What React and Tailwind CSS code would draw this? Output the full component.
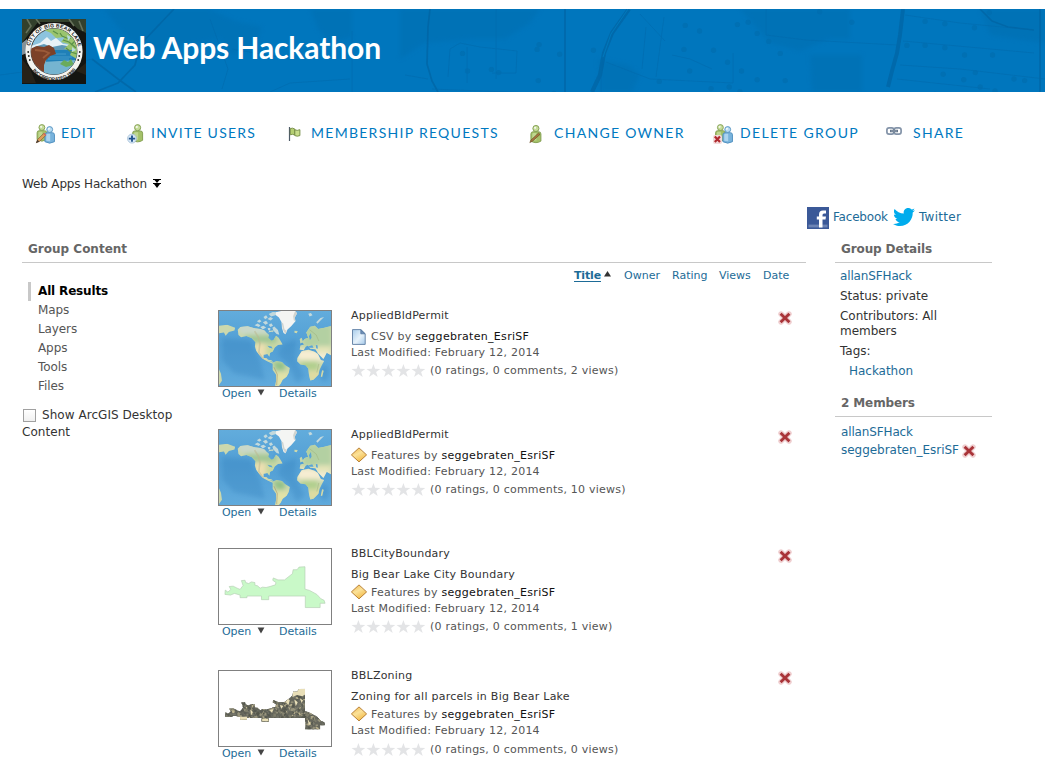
import React from "react";

const CITY_SHAPE =
  "M43 163 L44 150 L52 156 L61 148 L56 139 L68 138 L80 144 L89 148 L98 136 L93 121 L104 120 L106 127 L115 130 L123 125 L134 127 L134 135 L142 137 L150 144 L157 141 L168 142 L180 139 L196 134 L198 127 L188 120 L190 113 L204 119 L224 119 L248 100 L250 88 L262 88 L268 80 L286 79 V147 L300 151 L322 163 L334 176 L344 181 L347 190 L332 190 V203 H287 V168 H176 V179 H154 V168 H110 V173 H89 V165 L72 160 L60 165 Z";

function Person({ x = 0, y = 0, s = 1, tone }) {
  const light = tone === "green" ? "#c6dc9a" : "#b9dcf2";
  const dark = tone === "green" ? "#7f9c4d" : "#4c8dbd";
  return (
    <g transform={`translate(${x} ${y}) scale(${s})`} stroke={dark} strokeWidth="0.9">
      <path d="M0.6 9 Q0.6 6.8 2.8 6.8 H8.2 Q10.4 6.8 10.4 9 V16 Q5.5 19 0.6 16 Z" fill={tone === "green" ? "#a4c169" : "#78b3dc"} />
      <path d="M2 9 Q2 8 3.5 8 H6 V15.5 Q3 15.5 2 15 Z" fill={light} stroke="none" opacity="0.8" />
      <circle cx="5.5" cy="3.6" r="3" fill={light} />
      <circle cx="4.7" cy="2.9" r="1.1" fill="#fff" stroke="none" opacity="0.8" />
    </g>
  );
}

function Pencil() {
  return (
    <g>
      <path d="M1.5 18.6 L2.6 15.4 L8.6 9.6 L10.6 11.6 L4.6 17.4 Z" fill="#dca05a" stroke="#875a33" strokeWidth="0.7" />
      <path d="M8.2 10 L9.4 8.8 L11.5 10.9 L10.2 12 Z" fill="#d26a5e" />
      <path d="M0.8 19.2 L2.4 15.8 L4.3 17.6 Z" fill="#453a30" />
    </g>
  );
}

function EditIcon() {
  return (
    <svg width="20" height="20" viewBox="0 0 20 20">
      <Person x={1.5} y={0} s={0.98} tone="green" />
      <Person x={9.3} y={2} s={0.98} tone="blue" />
      <Pencil />
    </svg>
  );
}

function InviteIcon() {
  return (
    <svg width="17" height="20" viewBox="0 0 17 20">
      <Person x={5} y={0} s={1.02} tone="green" />
      <circle cx="5" cy="14.6" r="4.5" fill="#d8e8f5" stroke="#9cb8d4" strokeWidth="0.7" />
      <path d="M5 11.4 V17.8 M1.8 14.6 H8.2" stroke="#23548f" strokeWidth="1.9" />
    </svg>
  );
}

function FlagIcon() {
  return (
    <svg width="13" height="14" viewBox="0 0 13 14">
      <path d="M1.5 0 V14" stroke="#4d5a68" strokeWidth="1.2" />
      <path d="M2.3 1.6 Q4.5 0.5 6.8 2 V8 Q4.5 6.8 2.3 7.8 Z" fill="#b5cf72" stroke="#71893f" strokeWidth="0.9" />
      <path d="M6.8 2.8 Q9.3 4 11.9 2.7 V8.6 Q9.3 9.8 6.8 8.6 Z" fill="#c8dd8b" stroke="#71893f" strokeWidth="0.9" />
    </svg>
  );
}

function OwnerIcon() {
  return (
    <svg width="13" height="20" viewBox="0 0 13 20">
      <Person x={1.3} y={0.8} s={1.02} tone="green" />
      <path d="M0.8 18.6 L2 16 L9.6 9 L11 10.4 L3.4 17.3 Z" fill="#a8763f" stroke="#634522" strokeWidth="0.6" />
    </svg>
  );
}

function DeleteGroupIcon() {
  return (
    <svg width="20" height="20" viewBox="0 0 20 20">
      <Person x={2} y={0} s={0.98} tone="green" />
      <Person x={9.3} y={2} s={0.98} tone="blue" />
      <rect x="0" y="11" width="9" height="9" rx="2" fill="#f3dada" />
      <path d="M1.8 12.6 L7 18 M7 12.6 L1.8 18" stroke="#b02a2f" strokeWidth="2.2" />
    </svg>
  );
}

function LinkIcon() {
  return (
    <svg width="16" height="8" viewBox="0 0 16 8" fill="none">
      <rect x="0.9" y="0.9" width="7" height="6.2" rx="2.2" stroke="#8393a8" strokeWidth="1.7" />
      <rect x="8.1" y="0.9" width="7" height="6.2" rx="2.2" stroke="#8393a8" strokeWidth="1.7" />
      <path d="M4 4 H12" stroke="#44566e" strokeWidth="2.4" />
      <path d="M4.4 4 H11.6" stroke="#d5dee8" strokeWidth="0.8" />
    </svg>
  );
}

function RemoveIcon() {
  return (
    <svg width="14" height="14" viewBox="0 0 14 14" className="block shrink-0">
      <path d="M3 3 L11 11 M11 3 L3 11" stroke="#efcfd0" strokeWidth="5.4" strokeLinecap="round" />
      <path d="M2.6 2.8 L11.4 11.2 M11.4 2.8 L2.6 11.2" stroke="#a93439" strokeWidth="2.9" />
    </svg>
  );
}

function CsvIcon() {
  return (
    <svg width="16" height="16" viewBox="0 0 16 16" className="block">
      <defs>
        <linearGradient id="sheet" x1="0" y1="0" x2="1" y2="1">
          <stop offset="0" stopColor="#a9cdeb" />
          <stop offset="0.55" stopColor="#e6f2fb" />
          <stop offset="1" stopColor="#a5c9ea" />
        </linearGradient>
      </defs>
      <path d="M1.5 0.6 H9.8 L14.2 4.8 V15.4 H1.5 Z" fill="url(#sheet)" stroke="#6b88aa" strokeWidth="1" />
      <path d="M9.8 0.6 V4.8 H14 Z" fill="#6e8fb6" stroke="#54779f" strokeWidth="0.8" />
    </svg>
  );
}

function FeatureIcon() {
  return (
    <svg width="16" height="16" viewBox="0 0 16 16" className="-mt-0.5 block">
      <defs>
        <linearGradient id="diamond" x1="0" y1="0" x2="0.6" y2="1">
          <stop offset="0" stopColor="#f0b13c" />
          <stop offset="0.5" stopColor="#fbe29a" />
          <stop offset="1" stopColor="#f3bb48" />
        </linearGradient>
      </defs>
      <path d="M8 0.9 L15.6 7.9 L8 14.9 L0.4 7.9 Z" fill="url(#diamond)" stroke="#b98238" strokeWidth="1" strokeLinejoin="round" />
    </svg>
  );
}

function Stars() {
  return (
    <svg width="75" height="15" viewBox="0 0 75 15" className="block" fill="#e3e4e6">
      {[0, 15, 30, 45, 60].map((x) => (
        <path key={x} transform={`translate(${x} 0)`} d="M7.4 0.9 L9.1 5.8 L14.3 5.9 L10.1 9 L11.7 14 L7.4 11 L3.1 14 L4.7 9 L0.5 5.9 L5.7 5.8 Z" />
      ))}
    </svg>
  );
}

function WorldMap() {
  return (
    <svg width="112" height="75" viewBox="25 31 340 228" preserveAspectRatio="none" className="block">
      <defs>
        <linearGradient id="sea" x1="0" y1="0" x2="0" y2="1">
          <stop offset="0" stopColor="#62acdc" />
          <stop offset="0.45" stopColor="#529fd5" />
          <stop offset="1" stopColor="#60aadc" />
        </linearGradient>
        <filter id="soft" x="-10%" y="-10%" width="120%" height="120%">
          <feGaussianBlur stdDeviation="7" />
        </filter>
        <clipPath id="lands">
          <path d="M82 88 L90 80 L112 77 L130 83 L150 86 L163 90 L172 100 L178 92 L190 90 L188 102 L180 112 L190 120 L198 106 L206 112 L214 125 L218 133 L204 134 L194 142 L188 154 L180 158 L178 170 L172 162 L160 164 L160 174 L170 175 L178 184 L190 188 L189 192 L174 185 L158 176 L147 164 L138 152 L134 138 L136 126 L124 113 L108 107 L92 111 L84 104 Z" />
          <path d="M188 188 L200 183 L216 186 L225 195 L240 204 L237 219 L230 231 L218 240 L212 252 L206 260 H195 L199 240 L198 224 L188 210 Z" />
          <path d="M263 174 L276 153 L296 149 L315 155 L325 162 L334 180 L344 183 L336 198 L330 210 L327 224 L312 240 L302 242 L298 224 L296 206 L288 196 L272 194 L262 184 Z" />
          <path d="M270 148 L272 136 L284 133 L277 126 L285 116 L296 112 L290 96 L302 79 L316 76 L326 86 L345 82 L366 76 V166 L352 158 L342 177 L326 160 L318 147 L302 146 L294 136 L288 140 L282 150 Z" />
          <path d="M25 76 L50 73 L74 82 L72 90 L55 95 L45 106 L40 96 L25 99 Z" />
          <path d="M25 208 L31 222 L34 243 L25 256 Z M254 91 L264 92 L261 99 L254 97 Z M270 116 L276 112 L280 126 L272 130 Z M165 178 L184 181 L190 185 L178 184 Z M338 211 L343 213 L338 232 L334 230 Z" />
        </clipPath>
      </defs>
      <rect x="25" y="31" width="340" height="228" fill="url(#sea)" />
      <g fill="#327fbb" opacity="0.3" filter="url(#soft)">
        <path d="M35 112 L120 120 L150 185 L165 240 L70 220 L35 180 Z" />
        <path d="M215 135 L258 115 L256 175 L285 230 L260 250 L236 195 L205 165 Z" />
        <ellipse cx="345" cy="220" rx="14" ry="25" />
      </g>
      <g clipPath="url(#lands)">
        <rect x="25" y="31" width="340" height="228" fill="#cbd8ad" />
        <g filter="url(#soft)">
          <path d="M80 70 H215 V100 H90 Z" fill="#c9d8cb" />
          <path d="M100 105 H200 V128 H120 Z" fill="#a3c795" />
          <path d="M135 130 H166 V185 H135 Z" fill="#ecdfb0" />
          <path d="M168 132 H200 V165 H168 Z" fill="#c8d89f" />
          <path d="M188 185 H225 V212 H200 Z" fill="#93c189" />
          <path d="M198 218 H240 V260 H198 Z" fill="#e2e2a6" />
          <path d="M262 148 H345 V180 H262 Z" fill="#f6edd2" />
          <path d="M275 186 H325 V210 H275 Z" fill="#b1cf8d" />
          <path d="M295 214 H335 V240 H295 Z" fill="#dfdca0" />
          <path d="M280 75 H365 V140 H280 Z" fill="#b3d0a2" />
          <path d="M320 138 H365 V160 H320 Z" fill="#e4e4b8" />
          <path d="M325 160 H365 V182 H325 Z" fill="#f4ecd4" />
        </g>
        <path d="M133 92 L145 112 L149 130 L146 158 L160 178" stroke="#bcb68e" strokeWidth="5" fill="none" opacity="0.5" />
        <path d="M192 202 L202 224 L200 256" stroke="#a78c65" strokeWidth="3" fill="none" opacity="0.5" />
        <path d="M328 192 L322 218 M300 88 L320 104 L328 122" stroke="#9aab6f" strokeWidth="3" fill="none" opacity="0.4" />
      </g>
      <path d="M170 96 L177 104 L175 112 L184 121 L189 119 L187 108 L194 101 L187 94 Z" fill="#5aa5d8" />
      <path d="M172 137 L184 139 L188 145 L178 143 Z M295 139 L308 135 L312 143 L300 143 Z M319 134 L324 135 L325 146 L320 144 Z M298 108 L304 98 L306 112 L301 119 Z" fill="#5aa5d8" />
      <g fill="#c3d9dc">
        <path d="M133 74 L142 69 L151 74 L146 80 Z M150 80 L160 76 L168 81 L158 87 Z M140 62 L148 57 L154 62 L147 67 Z M158 65 L168 61 L174 68 L166 73 Z M160 49 L168 44 L173 51 L165 56 Z M172 55 L181 49 L189 54 L182 60 Z M176 40 L188 34 L204 35 L196 44 L183 48 Z M176 73 L184 68 L189 76 L181 80 Z M187 82 L193 78 L204 89 L208 103 L200 101 L190 90 Z M173 83 L181 83 L180 91 L174 89 Z M296 39 L304 37 L309 44 L300 48 Z M320 65 L333 52 L344 49 L331 62 L324 70 Z" />
      </g>
      <path d="M198 35 L214 31 H256 L262 38 L255 51 L257 62 L244 77 L233 87 L227 102 L221 98 L216 82 L215 65 L207 51 L197 43 Z" fill="#f4f5f3" />
      <path d="M215 65 L219 88 L227 102 L231 91 L224 87 L220 69 Z M256 31 L262 38 L255 51 L257 62 L252 59 L250 47 Z" fill="#d0d4d0" />
    </svg>
  );
}

function BoundaryMap() {
  return (
    <svg width="112" height="75" viewBox="25 25 340 228" preserveAspectRatio="none" className="block">
      <path d={CITY_SHAPE} fill="#c9f9c8" stroke="#b4ceb3" strokeWidth="2" strokeLinejoin="round" />
    </svg>
  );
}

const PARCEL_COLORS = ["#54564b", "#6f7065", "#7e7d6b", "#55584f", "#98947c", "#65675c", "#5b5d54", "#bdb48f", "#5a5c54", "#76766a"];
let seed = 11;
const random = () => {
  seed = (seed * 48271) % 2147483647;
  return seed / 2147483647;
};
const PARCELS = Array.from({ length: 1500 }, () => ({
  x: 38 + random() * 310,
  y: 76 + random() * 130,
  w: 3 + random() * 7,
  h: 3 + random() * 6,
  r: random() * 90,
  fill: PARCEL_COLORS[Math.floor(random() * PARCEL_COLORS.length)],
}));

function ZoningMap() {
  return (
    <svg width="112" height="75" viewBox="25 25 340 228" preserveAspectRatio="none" className="block">
      <defs>
        <clipPath id="city">
          <path d={CITY_SHAPE} />
        </clipPath>
      </defs>
      <g clipPath="url(#city)">
        <rect x="30" y="70" width="330" height="140" fill="#66675c" />
        {PARCELS.map((p, i) => (
          <rect key={i} x={p.x} y={p.y} width={p.w} height={p.h} fill={p.fill} transform={`rotate(${p.r} ${p.x} ${p.y})`} />
        ))}
        <g fill="#e9dfb8">
          <path d="M248 78 H288 V96 L278 102 L262 98 L248 104 Z" />
          <path d="M88 164 H110 V175 H88 Z M156 170 H174 V178 H156 Z M232 108 L240 114 L236 128 L228 120 Z M254 112 L264 120 L258 132 Z M270 108 L280 114 L276 122 Z M120 142 L128 150 L122 158 Z M178 143 L190 141 L186 152 Z M294 170 L302 184 L298 192 Z M210 128 L220 132 L214 140 Z" />
        </g>
      </g>
    </svg>
  );
}

function CityLogo() {
  return (
    <svg width="64" height="65" viewBox="0 0 64 65" className="block shrink-0">
      <defs>
        <path id="sealTop" d="M7.2 33 A24.8 24.8 0 0 1 56.8 33" />
        <path id="sealBottom" d="M4.2 34 A27.8 27.8 0 0 0 59.8 34" />
        <clipPath id="scene">
          <circle cx="32" cy="32.5" r="23" />
        </clipPath>
      </defs>
      <rect width="64" height="65" fill="#141511" />
      <path d="M0 0 H64 V14 L56 10 L48 3 H16 L6 16 L0 24 Z" fill="#33402c" />
      <path d="M5 0 L9 7 L4 14 M14 0 L18 5 M47 0 L52 7 M57 2 L61 12" stroke="#66715a" strokeWidth="1.6" fill="none" />
      <path d="M0 24 L5 20 V34 L0 36 Z" fill="#849299" />
      <path d="M0 40 L8 50 L14 64 H0 Z M54 52 L64 44 V56 Z" fill="#272218" />
      <circle cx="32" cy="32.5" r="28.6" fill="#f3f3ef" />
      <circle cx="32" cy="32.5" r="23" fill="#8cc3de" stroke="#222" strokeWidth="0.8" />
      <g clipPath="url(#scene)">
        <path d="M9 27 L18 24 L25 18 L29 22 L34 19 L41 25 L56 27 V33 H9 Z" fill="#e8f2f6" />
        <path d="M12 28 L22 25 L30 28 L40 26 L56 29 V34 H12 Z" fill="#5f9ab8" />
        <rect x="24" y="31" width="32" height="12" fill="#2080b8" />
        <path d="M20 43 L56 41 V57 H20 Z" fill="#75b4d0" />
        <path d="M25 35 H44 M28 38 H50 M26 40 H47" stroke="#4fa2cf" strokeWidth="0.8" />
        <path d="M8 30 L15 27 L22 28 L27 26 L32 29 L34 35 L28 37 L24 41 L22 46 L22 56 L17 56 L16 47 L13 56 L4 48 Z" fill="#7c4128" />
        <path d="M13 31 L22 32 L27 34 L21 39" stroke="#9b5a38" strokeWidth="1.8" fill="none" />
        <path d="M22 11 L34 8 L48 11 L57 24 L55 40 L48 36 L50 31 L42 30 L47 25 L39 23 L43 18 L34 19 L29 14 Z" fill="#9ac46e" />
        <path d="M38 14 L40 17 L47 20 M41 21 L47 23 L54 29 M44 29 L49 33 L55 35 M31 12 L36 15 M49 15 L48 20 M53 22 L49 26" stroke="#5a9148" strokeWidth="1.2" fill="none" />
        <path d="M45 16 L49 18 L46 22 Z M50 28 L54 31 L50 33 Z" fill="#b5dbe0" />
        <path d="M38 45 L42 41 L46 43 L49 40 L52 46 L44 48 Z" fill="#6aab5b" />
      </g>
      <g fill="#22221e">
        <circle cx="6.2" cy="33" r="0.9" /><circle cx="6.8" cy="37" r="0.9" /><circle cx="7.8" cy="41" r="0.9" />
        <circle cx="57.8" cy="33" r="0.9" /><circle cx="57.2" cy="37" r="0.9" /><circle cx="56.2" cy="41" r="0.9" />
      </g>
      <g fill="#161616" fontFamily="Liberation Sans, Arial, sans-serif" fontWeight="700" fontSize="5">
        <text textLength="66" lengthAdjust="spacing"><textPath href="#sealTop" startOffset="6">CITY OF BIG BEAR LAKE</textPath></text>
        <text fontSize="4.8" textLength="50" lengthAdjust="spacing"><textPath href="#sealBottom" startOffset="19">INCORPORATED 1980</textPath></text>
      </g>
    </svg>
  );
}

const TREES = [
  [338, 116], [333, 128], [152, 138], [164, 182], [222, 178], [240, 186], [336, 206], [388, 140], [374, 238], [470, 130],
  [690, 128], [704, 182], [693, 68], [728, 82], [762, 130], [630, 208], [820, 66], [846, 60], [868, 88], [896, 108],
  [924, 138], [796, 160], [830, 182], [868, 204], [936, 206], [756, 226], [800, 222], [826, 234], [1098, 60], [1020, 34],
  [1276, 58], [1324, 64], [1396, 74], [1232, 118], [1276, 118], [1324, 124], [1372, 142], [1440, 142], [1320, 190],
  [1370, 204], [1398, 186], [1492, 202], [1300, 240], [1358, 246], [1410, 222], [1446, 232], [1518, 206], [1432, 36],
];

function HeaderMap() {
  return (
    <svg className="absolute inset-0 h-full w-full" viewBox="0 0 1045 83" preserveAspectRatio="none">
      <defs>
        <filter id="haze"><feGaussianBlur stdDeviation="2" /></filter>
        <filter id="fine"><feGaussianBlur stdDeviation="0.5" /></filter>
      </defs>
      <g fill="#006fb2" opacity="0.6" filter="url(#haze)">
        <path d="M104 0 H210 L235 12 L262 18 L255 36 L232 46 L220 30 L150 42 L128 30 Z" />
        <path d="M310 0 H352 V28 L330 34 L318 20 Z M400 0 H540 L530 14 L505 30 H474 L424 34 L400 50 Z" />
        <path d="M598 50 L628 56 L640 66 L632 83 H600 Z M740 0 H850 V30 H830 L800 42 L770 34 Z M810 46 H862 V83 H812 Z M980 0 H1045 V34 L990 26 Z" />
      </g>
      <g filter="url(#fine)">
        <g fill="none" stroke="#00629f" opacity="0.6">
          <path d="M174 0 L140 36 L135 56 L118 74 L95 83 M92 50 L118 70 L136 83 M430 0 L428 18 L427 55 L432 72 L438 83 M565 0 V83" strokeWidth="1.8" />
          <path d="M629 0 L612 24 L604 44 L600 66 L592 83" strokeWidth="4.2" />
          <path d="M903 0 L900 26 L897 44 L892 62 L888 78" strokeWidth="4" />
          <path d="M980 0 L992 12 L1008 18 L1034 21 M1040 0 V83" strokeWidth="1.6" />
        </g>
        <path d="M628 0 L611 25 L603 48" stroke="#0079bd" strokeWidth="1" fill="none" />
        <g fill="none" stroke="#006aab" strokeWidth="0.9" opacity="0.6">
          <path d="M0 66 L60 58 L92 50 M210 10 L228 60 L222 80 M352 22 V83 M232 40 L290 50 M270 83 L290 74 L350 70 M405 66 L428 70 M448 68 L450 40 L460 34 L480 38 L517 42 L516 64 H492 M467 38 V74 M496 0 V70 M432 80 L532 84 M601 50 V83" />
          <path d="M640 5 L665 32 M646 18 L642 60 M664 8 L656 68 M606 53 L650 70 L733 74 M672 46 L690 50 L712 60 M733 44 V74 M766 0 V26 L806 31 L897 36 M905 6 L960 14 L1034 21 M900 56 L960 60 L1045 70 M903 32 L1034 44 M897 70 L990 80" />
        </g>
        <g fill="#006cae" opacity="0.65">
          {TREES.map(([x, y]) => (
            <circle key={`${x}-${y}`} cx={400 + x * 0.4115} cy={(y - 27) * 0.4} r="2.7" />
          ))}
        </g>
      </g>
    </svg>
  );
}

function SidePanel({ title, children }) {
  return (
    <section>
      <h2 className="h-[34px] border-b border-[#c8c8c8] pl-1.5 pt-3 text-[12px] font-bold leading-4 tracking-[-0.12px] text-[#666]">{title}</h2>
      {children}
    </section>
  );
}

const NAV = [
  { label: "EDIT", Icon: EditIcon, item: "w-[92px] tracking-[1px]", slot: "w-[26px] pt-1" },
  { label: "INVITE USERS", Icon: InviteIcon, item: "w-[161px] tracking-[1.24px]", slot: "w-6 pt-1" },
  { label: "MEMBERSHIP REQUESTS", Icon: FlagIcon, item: "w-[241px] tracking-[1.28px]", slot: "w-[23px] pt-1" },
  { label: "CHANGE OWNER", Icon: OwnerIcon, item: "w-[184px] tracking-[1.3px]", slot: "w-[25px] pt-1" },
  { label: "DELETE GROUP", Icon: DeleteGroupIcon, item: "w-[173px] tracking-[1.36px]", slot: "w-[27px] pt-1" },
  { label: "SHARE", Icon: LinkIcon, item: "w-[90px] tracking-[1.3px]", slot: "w-[27px] pb-0.5" },
];

const ITEMS = [
  { title: "AppliedBldPermit", type: "CSV", stats: "(0 ratings, 0 comments, 2 views)", Map: WorldMap, height: "h-[119px]" },
  { title: "AppliedBldPermit", type: "Features", stats: "(0 ratings, 0 comments, 10 views)", Map: WorldMap, height: "h-[119px]" },
  { title: "BBLCityBoundary", desc: "Big Bear Lake City Boundary", type: "Features", stats: "(0 ratings, 0 comments, 1 view)", Map: BoundaryMap, height: "h-[122px]" },
  { title: "BBLZoning", desc: "Zoning for all parcels in Big Bear Lake", type: "Features", stats: "(0 ratings, 0 comments, 0 views)", Map: ZoningMap, height: "h-[101px]", statsGap: "mt-[3px]" },
];

function ResultItem({ item }) {
  const { Map } = item;
  return (
    <article className={`flex items-start ${item.height}`}>
      <div className="w-[133px] shrink-0">
        <div className="h-[77px] w-[114px] border border-[#808080] bg-white">
          <Map />
        </div>
        <div className="flex h-[14px] items-center pl-1 leading-[14px] tracking-[-0.05px] text-[#1d6b97]">
          <a className="w-[35px]">Open</a>
          <svg width="8" height="7" viewBox="0 0 8 7" className="mb-[3px] mr-[14px]">
            <path d="M0.6 0.6 H7.4 L4 6.6 Z" fill="#444" />
          </svg>
          <a>Details</a>
        </div>
      </div>
      <div className="-mt-0.5 grow tracking-[0.22px] text-[#555]">
        <h3 className="h-4 leading-4 text-[#333]">{item.title}</h3>
        {item.desc && <p className="mt-[5px] h-4 leading-4 tracking-[0.25px] text-[#333]">{item.desc}</p>}
        <p className={`flex h-4 items-center leading-4 ${item.desc ? "mt-0.5" : "mt-[5px]"}`}>
          <span className="w-5">{item.type === "CSV" ? <CsvIcon /> : <FeatureIcon />}</span>
          <span className="whitespace-pre">{item.type} by </span>
          <a className="tracking-[0.3px] text-[#111]">seggebraten_EsriSF</a>
        </p>
        <p className="h-4 leading-4">Last Modified: February 12, 2014</p>
        <p className={`flex h-4 items-center leading-4 ${item.statsGap || "mt-0.5"}`}>
          <span className="mr-1 pb-px"><Stars /></span>
          {item.stats}
        </p>
      </div>
      <button className="mr-3.5 mt-px"><RemoveIcon /></button>
    </article>
  );
}

export default function App() {
  return (
    <div className="flex h-[771px] w-[1045px] flex-col overflow-hidden bg-white pt-[9px] font-['DejaVu_Sans',Verdana,sans-serif] text-[12px] text-[#333]">
      <header className="relative flex h-[83px] shrink-0 items-start bg-[#0076bd] pl-[22px] pt-[10px]">
        <HeaderMap />
        <div className="relative flex items-start">
          <CityLogo />
          <h1 className="ml-[7px] mt-[10px] whitespace-nowrap font-[Lato,sans-serif] text-[30px] font-bold leading-9 tracking-[-0.12px] text-white">Web Apps Hackathon</h1>
        </div>
      </header>

      <nav className="flex h-20 shrink-0 items-center pl-[35px] font-[Lato,sans-serif] text-[14px] text-[#0079c1]">
        {NAV.map(({ label, Icon, item, slot }) => (
          <a key={label} className={`flex h-6 shrink-0 items-center whitespace-nowrap ${item}`}>
            <span className={`shrink-0 ${slot}`}><Icon /></span>
            {label}
          </a>
        ))}
      </nav>

      <div className="mt-[3px] flex h-[18px] shrink-0 items-center gap-1.5 pl-[22px] leading-[18px] tracking-[-0.16px]">
        Web Apps Hackathon
        <svg width="8" height="9" viewBox="0 0 8 9" fill="#000" className="mb-0.5">
          <path d="M0 0 H8 V1 H6.5 L4 4 L1.5 1 H0 Z M0 4 H8 V5 H7 L4 9 L1 5 H0 Z" />
        </svg>
      </div>

      <div className="mt-3 flex h-6 shrink-0 items-center pl-[807px] text-[#1d6b97]">
        <svg width="22" height="22" viewBox="0 0 22 22" className="mr-1 mt-0.5">
          <rect width="22" height="22" fill="#3b5998" />
          <rect x="1.5" y="17.6" width="19" height="2.8" fill="#6d84b4" />
          <path d="M12 20.4 V12.6 H9.8 V9.4 H12 V7.5 Q12 3.4 16 3.4 H19 V6.5 H17 Q15.5 6.5 15.5 8 V9.4 H19 L18.5 12.6 H15.5 V20.4 Z" fill="#fff" />
        </svg>
        <a className="w-[60px] tracking-[-0.2px]">Facebook</a>
        <svg width="22" height="18" viewBox="0 0 24 19.5" className="mr-1">
          <path d="M24 2.3 C23.1 2.7 22.2 3 21.2 3.1 C22.2 2.5 23 1.5 23.3 0.4 C22.4 1 21.3 1.4 20.2 1.6 C19.3 0.6 18 0 16.6 0 C13.3 0 11 3 11.8 6 C7.7 5.8 4.1 3.8 1.7 0.9 C0.4 3 1 6 3.2 7.5 C2.4 7.4 1.7 7.2 1 6.9 C1 9.2 2.6 11.2 4.9 11.7 C4.2 11.9 3.5 11.9 2.7 11.8 C3.3 13.8 5.1 15.2 7.3 15.2 C5.2 16.8 2.6 17.6 0 17.3 C2.2 18.7 4.8 19.5 7.5 19.5 C16.7 19.5 21.9 11.8 21.5 4.8 C22.5 4.1 23.4 3.3 24 2.3 Z" fill="#00aced" />
        </svg>
        <a className="tracking-[0.28px]">Twitter</a>
      </div>

      <main className="flex grow items-start gap-[29px] pl-[22px]">
        <section className="w-[784px] shrink-0">
          <h2 className="h-[34px] border-b border-[#c8c8c8] pl-1.5 pt-3 text-[12px] font-bold leading-4 text-[#666]">Group Content</h2>
          <div className="flex items-start">
            <aside className="w-[196px] shrink-0 pt-[19px]">
              <ul className="ml-1.5 leading-[19px] text-[#555]">
                <li className="border-l-[3px] border-[#c8c8c8] pl-[7px] font-bold tracking-[-0.16px] text-black">All Results</li>
                {["Maps", "Layers", "Apps", "Tools", "Files"].map((name) => (
                  <li key={name} className="pl-[10px] tracking-[-0.1px]">{name}</li>
                ))}
              </ul>
              <label className="mt-[11px] block w-[160px] leading-[17px] text-[#333]">
                <span className="ml-px mr-[6px] inline-block h-[13px] w-[13px] border border-[#a0a0a0] bg-gradient-to-b from-white to-[#f0f0f0] align-[-3px]" />
                <span className="tracking-[0.05px]">Show ArcGIS Desktop Content</span>
              </label>
            </aside>

            <div className="w-[588px] text-[11px]">
              <div className="mt-[5px] flex h-4 items-center justify-end pr-[17px] leading-4 text-[#1d6b97]">
                <a className="w-[27px] border-b border-[#1d6b97] font-bold leading-[11px] tracking-[-0.16px]">Title</a>
                <svg width="7" height="6" viewBox="0 0 7 6" className="mb-1 ml-[3px] mr-[13px]">
                  <path d="M3.5 0 L7 5.6 H0 Z" fill="#333" />
                </svg>
                <a className="w-12">Owner</a>
                <a className="w-[47px]">Rating</a>
                <a className="w-11">Views</a>
                <a className="w-[26px]">Date</a>
              </div>
              <div className="mt-[26px]">
                {ITEMS.map((item, i) => <ResultItem key={i} item={item} />)}
              </div>
            </div>
          </div>
        </section>

        <aside className="w-[157px] shrink-0 tracking-[-0.03px]">
          <SidePanel title="Group Details">
            <div className="flex flex-col gap-[5px] pl-[5px] pt-1.5 leading-[15px]">
              <a className="tracking-[-0.14px] text-[#1d6b97]">allanSFHack</a>
              <p>Status: private</p>
              <p className="w-[120px]">Contributors: All members</p>
              <p>Tags:</p>
              <a className="pl-[9px] text-[#1d6b97]">Hackathon</a>
            </div>
          </SidePanel>
          <div className="mt-1">
            <SidePanel title="2 Members">
              <div className="flex flex-col pl-1.5 pt-1.5 leading-[18px] text-[#1d6b97]">
                <a className="tracking-[-0.14px]">allanSFHack</a>
                <span className="flex items-center gap-[3px]">
                  seggebraten_EsriSF
                  <span className="pt-0.5"><RemoveIcon /></span>
                </span>
              </div>
            </SidePanel>
          </div>
        </aside>
      </main>
    </div>
  );
}
